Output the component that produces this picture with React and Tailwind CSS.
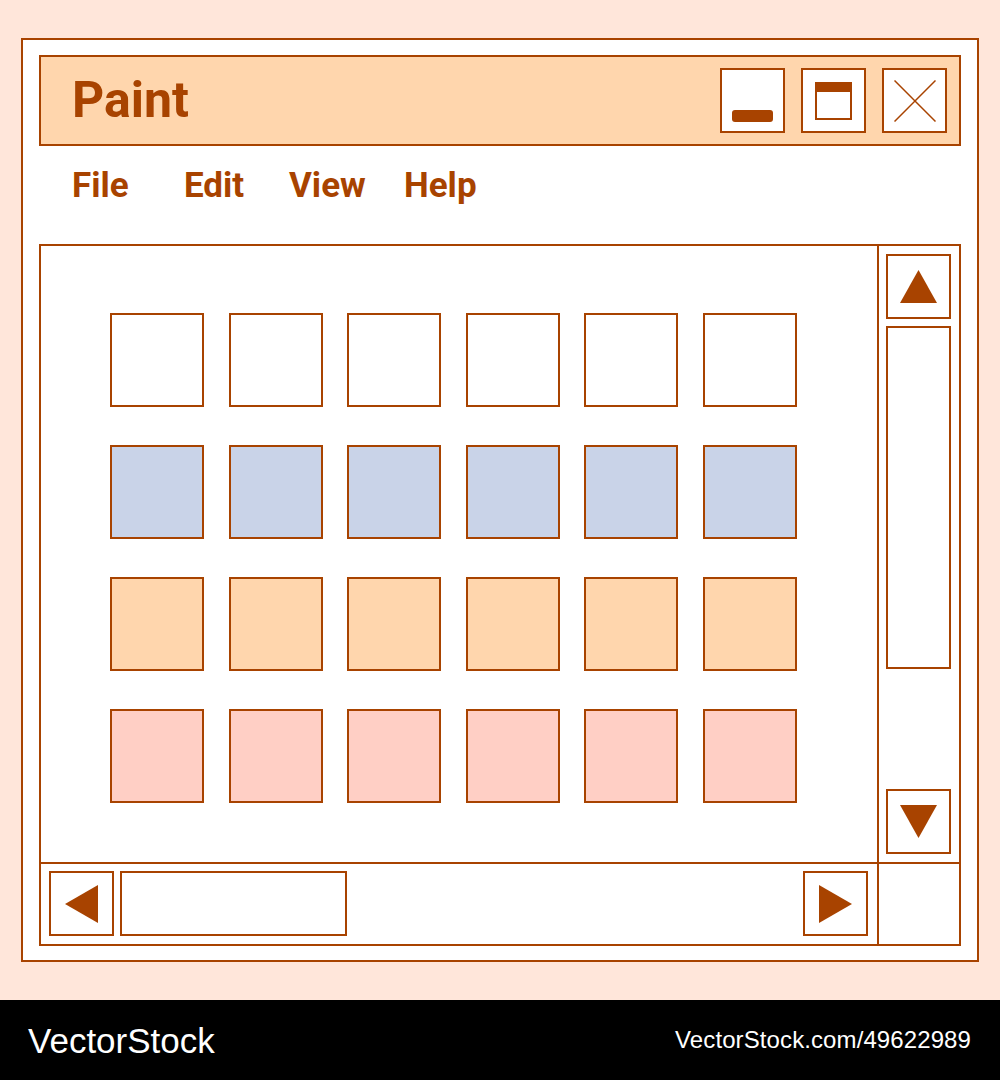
import React from 'react'

const rows = ['bg-white', 'bg-[#c9d3e8]', 'bg-[#ffd6ad]', 'bg-[#ffcfc5]']

function Tri({ dir }) {
  const pts = {
    up: '18.5,0 37,33 0,33',
    down: '0,0 37,0 18.5,33',
    left: '0,19 33,0 33,38',
    right: '0,0 33,19 0,38',
  }
  const horiz = dir === 'left' || dir === 'right'
  return (
    <svg width={horiz ? 33 : 37} height={horiz ? 38 : 33} viewBox={horiz ? '0 0 33 38' : '0 0 37 33'}>
      <polygon points={pts[dir]} fill="#a84300" />
    </svg>
  )
}

function ArrowBtn({ dir }) {
  return (
    <div className="w-[65px] h-[65px] shrink-0 border-2 border-[#a84300] bg-white flex items-center justify-center">
      <Tri dir={dir} />
    </div>
  )
}

export default function App() {
  return (
    <div className="w-[1000px] h-[1080px] flex flex-col font-['Roboto',sans-serif]">
      <div className="h-[1000px] bg-[#ffe6da] pt-[38px] pl-[21px]">
        <div className="w-[958px] h-[924px] border-2 border-[#a84300] bg-white pt-[15px] px-[16px]">
          {/* title bar */}
          <div className="h-[91px] border-2 border-[#a84300] bg-[#ffd6ad] flex items-center pl-[31px] pr-[12px]">
            <div className="flex-1 text-[50px] font-bold text-[#a84300] leading-none pb-[2px]">Paint</div>
            <div className="flex gap-[16px]">
              <div className="w-[65px] h-[65px] border-2 border-[#a84300] bg-white flex items-end justify-center pb-[9px]">
                <div className="w-[41px] h-[12px] rounded-[3px] bg-[#a84300]" />
              </div>
              <div className="w-[65px] h-[65px] border-2 border-[#a84300] bg-white flex items-center justify-center">
                <div className="w-[37px] h-[38px] border-2 border-[#a84300] border-t-[10px]" />
              </div>
              <div className="w-[65px] h-[65px] border-2 border-[#a84300] bg-white flex items-center justify-center">
                <svg width="42" height="42" viewBox="0 0 42 42">
                  <line x1="0.5" y1="0.5" x2="41.5" y2="41.5" stroke="#a84300" strokeWidth="1.5" />
                  <line x1="41.5" y1="0.5" x2="0.5" y2="41.5" stroke="#a84300" strokeWidth="1.5" />
                </svg>
              </div>
            </div>
          </div>

          {/* menu */}
          <div className="h-[98px] flex items-center pl-[33px] pb-[20px] text-[35px] font-bold text-[#a84300] leading-none">
            <span className="w-[112px]">File</span>
            <span className="w-[105px]">Edit</span>
            <span className="w-[115px]">View</span>
            <span>Help</span>
          </div>

          {/* canvas */}
          <div className="h-[702px] border-2 border-[#a84300] grid grid-cols-[1fr_80px] grid-rows-[1fr_80px]">
            <div className="border-r-2 border-b-2 border-[#a84300] pl-[69px] pt-[67px]">
              <div className="grid grid-cols-[repeat(6,94px)] gap-x-[24.6px] gap-y-[38px]">
                {rows.flatMap((bg, r) =>
                  Array.from({ length: 6 }, (_, c) => (
                    <div key={r + '-' + c} className={'w-[94px] h-[94px] border-2 border-[#a84300] ' + bg} />
                  )),
                )}
              </div>
            </div>
            <div className="border-b-2 border-[#a84300] flex flex-col pl-[7px] pt-[8px] pb-[8px] gap-[7px]">
              <ArrowBtn dir="up" />
              <div className="w-[65px] h-[343px] border-2 border-[#a84300] bg-white" />
              <div className="flex-1" />
              <ArrowBtn dir="down" />
            </div>
            <div className="border-r-2 border-[#a84300] flex items-start pl-[8px] pt-[7px] pr-[9px] gap-[6px]">
              <ArrowBtn dir="left" />
              <div className="w-[227px] h-[65px] border-2 border-[#a84300] bg-white" />
              <div className="flex-1" />
              <ArrowBtn dir="right" />
            </div>
            <div />
          </div>
        </div>
      </div>
      <div className="h-[80px] bg-black flex items-center justify-between pl-[28px] pr-[29px] text-white font-['Liberation_Sans',sans-serif]">
        <span className="text-[35px] leading-none">VectorStock</span>
        <span className="text-[24px] tracking-[0.1px] leading-none">VectorStock.com/49622989</span>
      </div>
    </div>
  )
}
